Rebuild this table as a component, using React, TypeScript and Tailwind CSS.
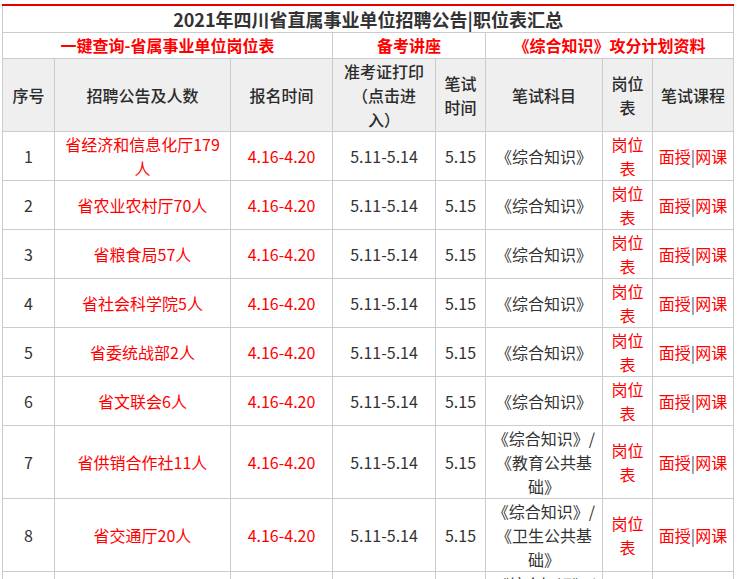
import React from "react";

type Row = {
  no: string;
  name: string[];
  subject: string[];
};

const rows: Row[] = [
  { no: "1", name: ["省经济和信息化厅179", "人"], subject: ["《综合知识》"] },
  { no: "2", name: ["省农业农村厅70人"], subject: ["《综合知识》"] },
  { no: "3", name: ["省粮食局57人"], subject: ["《综合知识》"] },
  { no: "4", name: ["省社会科学院5人"], subject: ["《综合知识》"] },
  { no: "5", name: ["省委统战部2人"], subject: ["《综合知识》"] },
  { no: "6", name: ["省文联会6人"], subject: ["《综合知识》"] },
  { no: "7", name: ["省供销合作社11人"], subject: ["《综合知识》/", "《教育公共基", "础》"] },
  { no: "8", name: ["省交通厅20人"], subject: ["《综合知识》/", "《卫生公共基", "础》"] },
  { no: "9", name: ["省卫生健康委员会12人"], subject: ["《综合知识》/", "《卫生公共基", "础》"] },
];

const td = "border border-[#cccccc] px-1 py-0 text-center align-middle";

function Lines({ items }: { items: string[] }) {
  return (
    <>
      {items.map((t, i) => (
        <div key={i}>{t}</div>
      ))}
    </>
  );
}

export default function App() {
  return (
    <div
      className="bg-white pt-[4px] pl-[2px] h-[579px] overflow-hidden"
      style={{ fontFamily: '"Noto Sans CJK SC", "Noto Sans", sans-serif' }}
    >
      <table className="table-fixed border-collapse w-[731px] text-[16px] leading-[24px] text-[#333333]">
        <colgroup>
          <col className="w-[52px]" />
          <col className="w-[176px]" />
          <col className="w-[102px]" />
          <col className="w-[103px]" />
          <col className="w-[50px]" />
          <col className="w-[117px]" />
          <col className="w-[50px]" />
          <col className="w-[81px]" />
        </colgroup>
        <tbody>
          {/* TITLE */}
          <tr>
            <td
              colSpan={8}
              className="border border-[#cccccc] border-t-2 border-t-[#e60000] text-center text-[18px] leading-[26px] font-bold text-[#333333]"
            >
              2021年四川省直属事业单位招聘公告|职位表汇总
            </td>
          </tr>

          {/* LINKS */}
          <tr className="text-[#ff0000] font-bold leading-[25px]">
            <td colSpan={3} className={td}>一键查询-省属事业单位岗位表</td>
            <td colSpan={2} className={td}>备考讲座</td>
            <td colSpan={3} className={td}>《综合知识》攻分计划资料</td>
          </tr>

          {/* HEADER */}
          <tr className="bg-[#efefef] text-[#2b2b2b] font-medium">
            <td className={td}>序号</td>
            <td className={td}>招聘公告及人数</td>
            <td className={td}>报名时间</td>
            <td className={td}>
              <Lines items={["准考证打印", "（点击进", "入）"]} />
            </td>
            <td className={td}>
              <Lines items={["笔试", "时间"]} />
            </td>
            <td className={td}>笔试科目</td>
            <td className={td}>
              <Lines items={["岗位", "表"]} />
            </td>
            <td className={td}>笔试课程</td>
          </tr>

          {/* ROWS */}
          {rows.map((r) => (
            <tr key={r.no}>
              <td className={td}>{r.no}</td>
              <td className={`${td} text-[#ff0000]`}>
                <Lines items={r.name} />
              </td>
              <td className={`${td} text-[#ff0000]`}>4.16-4.20</td>
              <td className={td}>5.11-5.14</td>
              <td className={td}>5.15</td>
              <td className={td}>
                <Lines items={r.subject} />
              </td>
              <td className={`${td} text-[#ff0000]`}>
                <div>岗位</div>
                <div>表</div>
              </td>
              <td className={`${td} whitespace-nowrap px-0`}>
                <span className="text-[#ff0000]">面授</span>
                <span className="text-[#4a5a6a]">|</span>
                <span className="text-[#ff0000]">网课</span>
              </td>
            </tr>
          ))}
        </tbody>
      </table>
    </div>
  );
}
